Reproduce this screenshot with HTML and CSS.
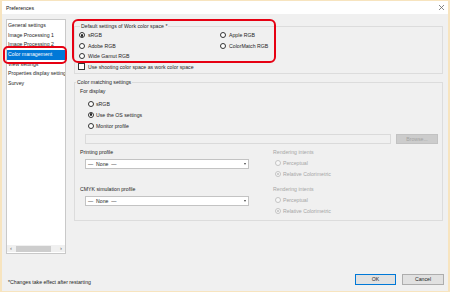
FILE: index.html
```html
<!DOCTYPE html>
<html>
<head>
<meta charset="utf-8">
<link rel="stylesheet" href="styles.css">
</head>
<body>
<div class="window">
  <div class="titlebar">
    <span class="title">Preferences</span>
    <svg class="close" width="7" height="7" viewBox="0 0 7 7"><path d="M1 1L6 6M6 1L1 6" stroke="#6a6a6a" stroke-width="0.8"/></svg>
  </div>
  <div class="body">
    <div class="sidebar">
      <ul class="list">
        <li>General settings</li>
        <li>Image Processing 1</li>
        <li>Image Processing 2</li>
        <li class="sel">Color management</li>
        <li>View settings</li>
        <li>Properties display settings</li>
        <li>Survey</li>
      </ul>
      <div class="hscroll">
        <span class="arr">‹</span>
        <span class="track"><span class="thumb"></span></span>
        <span class="arr">›</span>
      </div>
    </div>
    <div class="main">
      <fieldset class="group g1">
        <legend>Default settings of Work color space *</legend>
        <div class="radios2">
          <div class="opt"><span class="radio on"></span>sRGB</div>
          <div class="opt"><span class="radio"></span>Apple RGB</div>
          <div class="opt"><span class="radio"></span>Adobe RGB</div>
          <div class="opt"><span class="radio"></span>ColorMatch RGB</div>
          <div class="opt"><span class="radio"></span>Wide Gamut RGB</div>
        </div>
        <div class="opt chk"><span class="checkbox"></span>Use shooting color space as work color space</div>
      </fieldset>
      <fieldset class="group g2">
        <legend>Color matching settings</legend>
        <div class="inner">
          <div class="label">For display</div>
          <div class="disp-radios">
            <div class="opt tall"><span class="radio"></span>sRGB</div>
            <div class="opt tall"><span class="radio on"></span>Use the OS settings</div>
            <div class="opt tall"><span class="radio"></span>Monitor profile</div>
          </div>
          <div class="filerow">
            <div class="field"></div>
            <div class="browse">Browse...</div>
          </div>
          <div class="profile-row">
            <div class="pleft">
              <div class="plabel">Printing profile</div>
              <div class="select"><span>—&nbsp; None &nbsp;—</span><span class="caret"></span></div>
            </div>
            <div class="pright">
              <div class="ri">Rendering intents</div>
              <div class="opt ri dis"><span class="radio"></span>Perceptual</div>
              <div class="opt ri dis"><span class="radio on"></span>Relative Colorimetric</div>
            </div>
          </div>
          <div class="profile-row r2">
            <div class="pleft">
              <div class="plabel">CMYK simulation profile</div>
              <div class="select"><span>—&nbsp; None &nbsp;—</span><span class="caret"></span></div>
            </div>
            <div class="pright">
              <div class="ri">Rendering intents</div>
              <div class="opt ri dis"><span class="radio"></span>Perceptual</div>
              <div class="opt ri dis"><span class="radio on"></span>Relative Colorimetric</div>
            </div>
          </div>
        </div>
      </fieldset>
    </div>
  </div>
  <div class="footer">
    <span class="note">*Changes take effect after restarting</span>
    <div class="buttons">
      <div class="btn ok">OK</div>
      <div class="btn">Cancel</div>
    </div>
  </div>
  <div class="annot a-side"></div>
  <div class="annot a-main"></div>
</div>
</body>
</html>
```
FILE: styles.css
```css
* { box-sizing: border-box; }
html, body { margin: 0; padding: 0; }
body {
  width: 450px;
  height: 292px;
  overflow: hidden;
  font-family: "Liberation Sans", Arial, sans-serif;
  font-size: 5.2px;
  color: #1e1e1e;
  background: #f0f0f0;
}
.window {
  position: relative;
  width: 450px;
  height: 292px;
  border-top: 1px solid #f7e4bf;
  border-left: 2px solid #f7e4bf;
  border-right: 2px solid #f7e4bf;
  border-bottom: 1px solid #f7e4bf;
  background: #f0f0f0;
  display: flex;
  flex-direction: column;
}
.titlebar {
  height: 13px;
  flex: none;
  background: #fff;
  display: flex;
  align-items: center;
  justify-content: space-between;
  padding: 0 3px 0 4px;
}
.title { line-height: 8px; color: #111; }
.close { display: block; }

.body {
  flex: none;
  display: grid;
  grid-template-columns: 60px 1fr;
  column-gap: 8px;
  padding: 5px 5px 0 4px;
}
.sidebar {
  height: 235px;
  background: #fff;
  border: 1px solid #c9c9c9;
  display: flex;
  flex-direction: column;
  overflow: hidden;
}
.list {
  list-style: none;
  margin: 0;
  padding: 0.85px 0 0 0;
  flex: 1;
}
.list li {
  height: 9.7px;
  line-height: 9.7px;
  padding-left: 1px;
  white-space: nowrap;
  overflow: hidden;
}
.list li.sel { background: #0078d7; color: #fff; }
.hscroll {
  height: 7px;
  flex: none;
  display: flex;
  align-items: center;
  background: #f0f0f0;
  margin-bottom: 1px;
}
.arr {
  width: 8px;
  text-align: center;
  color: #606060;
  font-size: 6px;
  line-height: 7px;
}
.track { flex: 1; height: 7px; position: relative; display: flex; align-items: center; }
.thumb { display: block; width: 35px; height: 6px; background: #cdcdcd; margin-left: 1px; }

.main { display: flex; flex-direction: column; }
.group {
  margin: 0;
  border: 1px solid #dcdcdc;
  min-width: 0;
}
.group legend {
  padding: 0 1px;
  margin-left: 1px;
  line-height: 8px;
  height: 8px;
}
.g1 { margin-top: 3px; padding: 0 4px 1.5px 4px; }
.g2 { margin-top: 4px; padding: 0 0 3.5px 0; }

.radios2 {
  display: grid;
  grid-template-columns: 141px 1fr;
}
.opt {
  display: flex;
  align-items: center;
  height: 10.5px;
  white-space: nowrap;
}
.radio {
  width: 6px;
  height: 6px;
  border-radius: 50%;
  border: 0.8px solid #333;
  background: #fff;
  margin-right: 3px;
  flex: none;
  position: relative;
}
.radio.on::after {
  content: "";
  position: absolute;
  left: 50%;
  top: 50%;
  width: 2.6px;
  height: 2.6px;
  margin: -1.3px 0 0 -1.3px;
  border-radius: 50%;
  background: #222;
}
.chk { height: 10px; margin-left: -1px; }
.checkbox {
  width: 7px;
  height: 7px;
  border: 0.8px solid #333;
  background: #fff;
  margin-right: 3px;
  flex: none;
}

.inner { padding: 0 0 0 5px; }
.label { height: 10px; line-height: 10px; }
.disp-radios { margin-top: 2px; padding-left: 8px; }
.opt.tall { height: 11px; }
.opt.tall .radio { margin-right: 2px; }
.filerow {
  display: flex;
  margin-top: 3px;
  margin-left: 5px;
  gap: 5px;
}
.field {
  width: 306px;
  height: 10px;
  border: 1px solid #dadada;
  background: #f0f0f0;
}
.browse {
  width: 42px;
  height: 10px;
  background: #cccccc;
  border: 1px solid #c2c2c2;
  color: #a3a3a3;
  text-align: center;
  line-height: 8px;
}
.profile-row {
  display: grid;
  grid-template-columns: 193px 1fr;
  margin-top: 2.5px;
}
.profile-row.r2 { margin-top: 4px; }
.plabel { height: 11px; line-height: 11px; }
.select {
  margin-top: 1.5px;
  margin-left: 5px;
  width: 164px;
  height: 10px;
  background: #fff;
  border: 1px solid #c3c3c3;
  display: flex;
  align-items: center;
  justify-content: space-between;
  padding: 0 2px 0 2px;
}
.caret {
  width: 0;
  height: 0;
  border-left: 1.5px solid transparent;
  border-right: 1.5px solid transparent;
  border-top: 2px solid #444;
}
.ri { height: 11px; line-height: 11px; color: #a6a6a6; }
.opt.ri { padding-left: 2px; }
.dis .radio { border-color: #c4c4c4; background: #f7f7f7; margin-right: 2px; }
.dis .radio.on::after { background: #c0c0c0; }

.footer {
  flex: none;
  display: flex;
  justify-content: space-between;
  align-items: flex-start;
  padding: 20px 4px 0 6px;
}
.note { margin-top: 3px; line-height: 10px; }
.buttons { display: flex; gap: 6px; }
.btn {
  width: 42px;
  height: 11px;
  line-height: 9px;
  text-align: center;
  background: #e1e1e1;
  border: 1px solid #adadad;
}
.btn.ok { width: 41px; border-color: #0078d7; }

.annot {
  position: absolute;
  border: 2px solid #e60012;
  border-radius: 6px;
  pointer-events: none;
}
.a-side { left: 1px; top: 45px; width: 64px; height: 18px; border-radius: 5px; }
.a-main { left: 70px; top: 18px; width: 204px; height: 44px; }
```
